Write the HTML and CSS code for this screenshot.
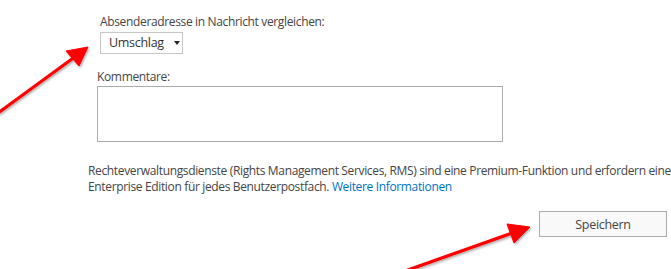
FILE: index.html
```html
<!DOCTYPE html>
<html>

	<head>
		<meta charset="UTF-8">
		<title>RMS</title>
		<link rel="stylesheet" href="styles.css">
	</head>

	<body>
		<section class="page">
			<div class="sender">
				<div class="label">Absenderadresse in Nachricht vergleichen:</div>
				<div class="select">
					<span>Umschlag</span>
					<i class="caret"></i>
				</div>
			</div>
			<div class="comments">
				<div class="label">Kommentare:</div>
				<div class="textbox"></div>
			</div>
			<p class="rms">Rechteverwaltungsdienste (Rights Management Services, RMS) sind eine Premium-Funktion und erfordern eine<br>Enterprise Edition für jedes Benutzerpostfach. <a href="javascript:;">Weitere Informationen</a></p>
			<div class="actions">
				<button class="save">Speichern</button>
			</div>
			<!-- rote Pfeile ueber dem Inhalt -->
			<svg class="arrows" width="671" height="269" viewBox="0 0 671 269">
				<defs>
					<filter id="shadow" x="-20%" y="-20%" width="140%" height="140%">
						<feDropShadow dx="1" dy="1.5" stdDeviation="1" flood-color="#000" flood-opacity="0.35"/>
					</filter>
				</defs>
				<g fill="#f00" stroke="#f00" filter="url(#shadow)">
					<line x1="-2" y1="113" x2="76" y2="56" stroke-width="3.2"/>
					<polygon points="88,47 66,51 79,66" stroke-width="1"/>
					<line x1="405" y1="271" x2="515" y2="232" stroke-width="3.2"/>
					<polygon points="530,227 507,224 514,243" stroke-width="1"/>
				</g>
			</svg>
		</section>
	</body>

</html>
```

FILE: styles.css
```css
body {
	margin: 0;
	background: #fff;
}

.page {
	position: relative;
	width: 671px;
	height: 269px;
	overflow: hidden;
	font: 12px/16px "Open Sans", "Liberation Sans", sans-serif;
	letter-spacing: -0.35px;
	color: #444;
}

.sender {
	padding: 14px 0 0 100px;
}

.label {
	margin-bottom: 2px;
}

.select {
	display: flex;
	align-items: center;
	box-sizing: border-box;
	width: 83px;
	height: 22px;
	padding: 0 0 0 8px;
	border: 1px solid #c6c6c6;
	font-size: 12.5px;
	letter-spacing: -0.3px;
	color: #333;
}

.caret {
	margin-left: 10px;
	width: 0;
	height: 0;
	border-left: 3.5px solid transparent;
	border-right: 3.5px solid transparent;
	border-top: 4px solid #222;
}

.comments {
	padding: 15px 0 0 97px;
}

.comments .label {
	margin-bottom: 1px;
}

.textbox {
	box-sizing: border-box;
	width: 406px;
	height: 56px;
	border: 1px solid #ababab;
}

.rms {
	margin: 21px 0 0 88px;
	white-space: nowrap;
}

.rms a {
	color: #0072c6;
	text-decoration: none;
}

.actions {
	display: flex;
	justify-content: flex-end;
	padding: 16px 4px 0 0;
}

.save {
	box-sizing: border-box;
	width: 128px;
	height: 26px;
	border: 1px solid #ababab;
	background: #f9f9f9;
	font: 12.5px "Open Sans", "Liberation Sans", sans-serif;
	letter-spacing: -0.3px;
	color: #444;
}

.arrows {
	position: absolute;
	left: 0;
	top: 0;
	pointer-events: none;
}
```
